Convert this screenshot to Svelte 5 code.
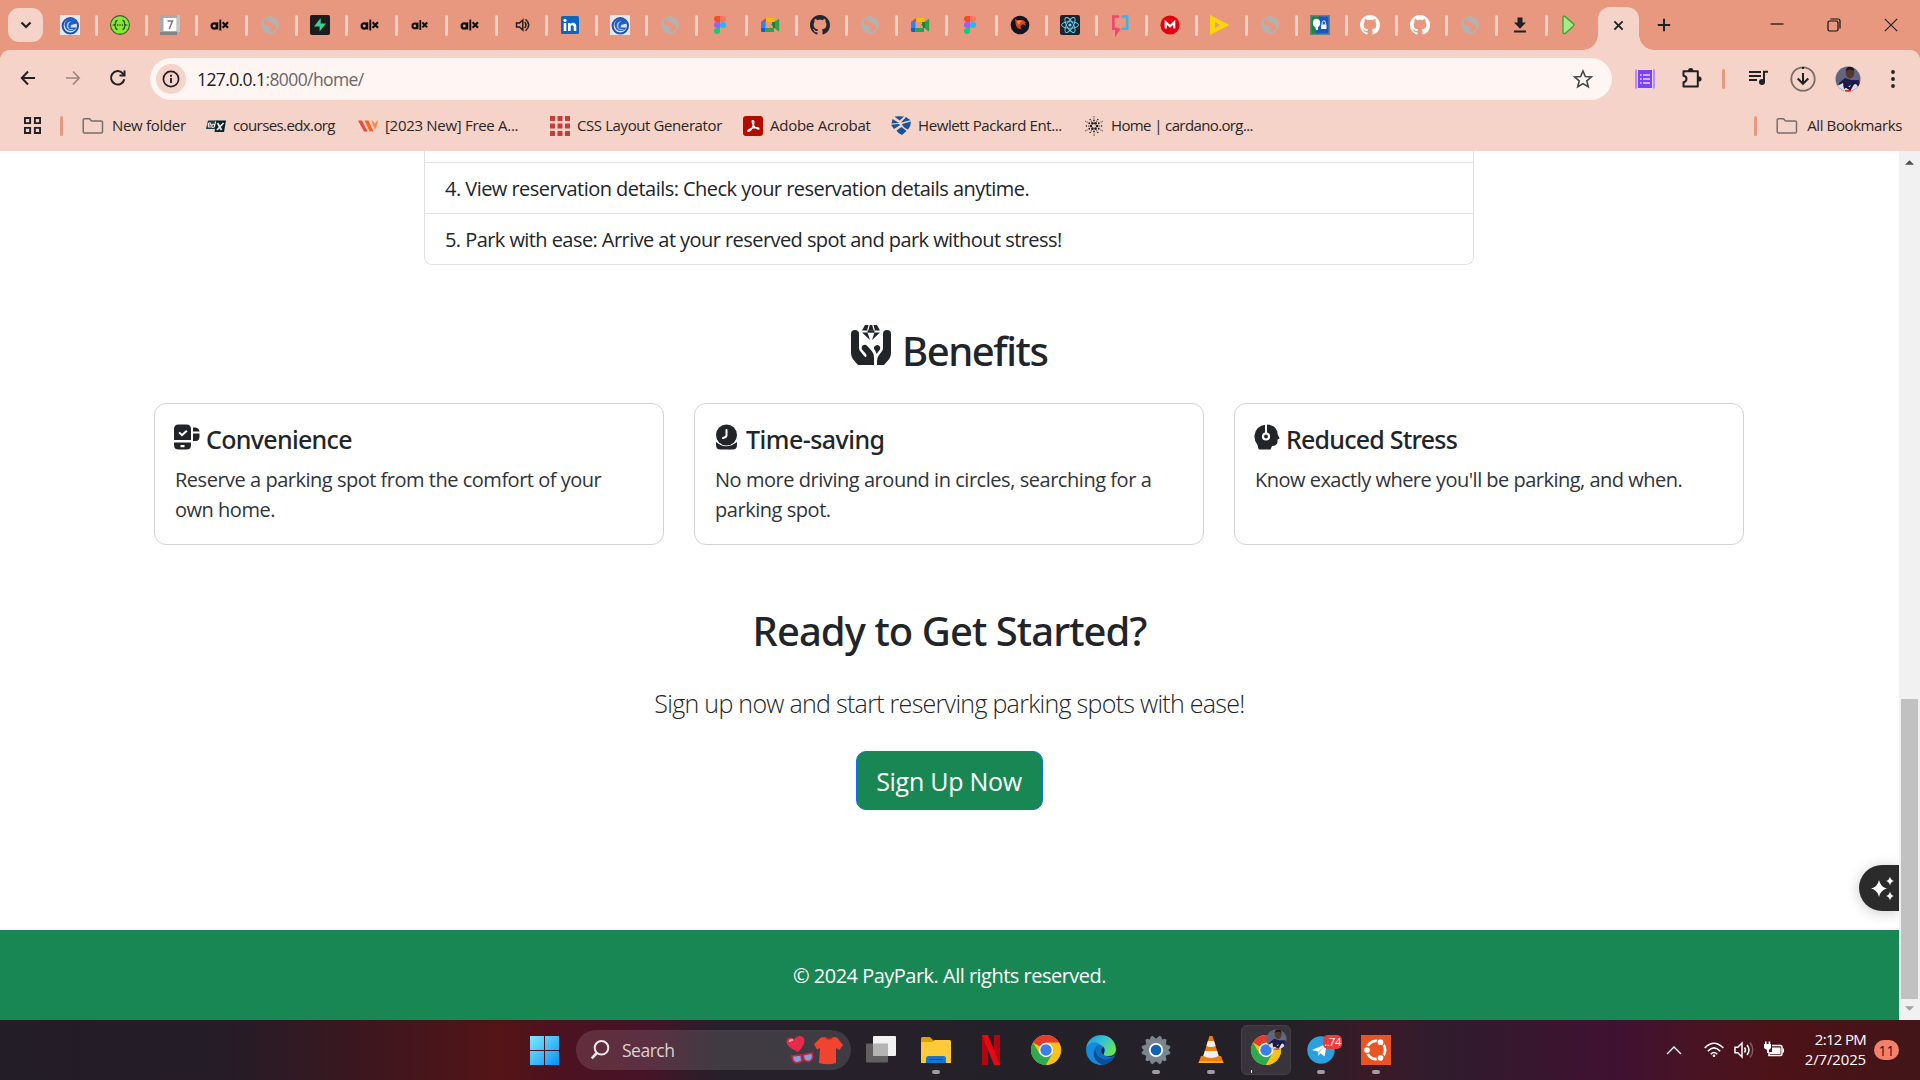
<script>
  const tabs = ['swirl', 'swagger', 'seven', 'alx', 'globe', 'supabase', 'alx', 'alxs', 'alx', 'sound', 'linkedin', 'swirl', 'globe', 'figma', 'meet', 'github', 'globe', 'meet', 'figma', 'dragon', 'react', 'bubble', 'mega', 'yellow', 'globe', 'privacy', 'githubw', 'githubw', 'globe', 'download', 'play'];
  const bookmarks = [
    ['folder', 'New folder', 'b1'],
    ['edx', 'courses.edx.org', 'b2'],
    ['wave', '[2023 New] Free A...', 'b3'],
    ['gridred', 'CSS Layout Generator', 'b4'],
    ['acrobat', 'Adobe Acrobat', 'b5'],
    ['hpe', 'Hewlett Packard Ent...', 'b6'],
    ['cardano', 'Home | cardano.org...', 'b7']
  ];
  const cards = [
    ['conv', 'Convenience', 'Reserve a parking spot from the comfort of your own home.'],
    ['time', 'Time-saving', 'No more driving around in circles, searching for a parking spot.'],
    ['head', 'Reduced Stress', "Know exactly where you'll be parking, and when."]
  ];
  const apps = [
    ['taskview', ''], ['explorer', 'open'], ['netflix', ''], ['chrome', ''], ['edge', ''],
    ['settings', 'open'], ['vlc', 'open'], ['chromeuser', 'active'], ['telegram', 'open'], ['ubuntu', 'open']
  ];
  // Rings of dots: radius, count, dot size, angular offset
  const dots = [];
  for (const [r, n, s, o] of [[3.1, 6, 1.35, 0], [5.5, 6, 0.9, 0.52], [5.6, 6, 0.6, 0], [7.6, 6, 0.75, 0], [8, 6, 0.6, 0.52], [9.6, 6, 0.5, 0.52]])
    for (let i = 0; i < n; i++) {
      const a = (i / n) * Math.PI * 2 + o;
      dots.push([10 + r * Math.cos(a), 10 + r * Math.sin(a), s]);
    }
</script>

{#snippet chromeLogo()}
  <circle cx="15" cy="15" r="15" fill="#fbc116" />
  <path d="M2 7.500A15 15 0 0 1 28 7.500L15 15z" fill="#e33b2e" />
  <path d="M2 7.500A15 15 0 0 0 15 30L21.500 18.750 15 15 8.500 18.750z" fill="#2da94f" />
  <path d="M28 7.500A15 15 0 0 1 15 30L21.500 18.750 15 7.500z" fill="#fbc116" />
  <circle cx="15" cy="15" r="7.200" fill="#fff" />
  <circle cx="15" cy="15" r="5.700" fill="#3b7ded" />
{/snippet}

{#snippet avatar(cls)}
  <svg class={cls} viewBox="0 0 26 26">
    <defs><clipPath id="face"><circle cx="13" cy="13" r="12.500" /></clipPath></defs>
    <g clip-path="url(#face)">
      <rect width="26" height="26" fill="#626580" />
      <path d="M4 17l6-5 6 2 8 0 2 12H3z" fill="#1f1c4b" />
      <ellipse cx="15" cy="6.500" rx="4.300" ry="6" fill="#54382f" />
      <path d="M10.500 5Q12-1 18.500 1.500L19 5Q15 2 10.500 5z" fill="#17151c" />
      <path d="M2 20l6-3 1 6 7-4 5-1 3 4v5H2z" fill="#dcdbe6" />
      <path d="M9 19l6 4 4-7" stroke="#17163c" stroke-width="2.500" fill="none" />
      <path d="M10 24h6v2h-6z" fill="#e02020" />
    </g>
  </svg>
{/snippet}

{#snippet icon(n)}
  {#if n === 'swirl'}
    <svg viewBox="0 0 20 20"><rect width="20" height="20" fill="#e6e8f0" /><circle cx="10.300" cy="10.800" r="7.700" fill="#dbe6f7" stroke="#2552a8" stroke-width="2" /><path d="M14.500 4.500a6.300 6.300 0 1 0 2 8h-6l.5-2.500 6-1.500q-.5-2.500-2.500-4z" fill="#1f5fc9" /><path d="M11.500 6.300a4.500 4.500 0 1 0 2.800 7.700q-6 1-6-3 .3-3.500 3.200-4.700z" fill="#a9c8f5" /></svg>
  {:else if n === 'swagger'}
    <svg viewBox="0 0 20 20"><circle cx="10" cy="10" r="9.400" fill="#85ea2d" stroke="#3e5a3c" stroke-width="1.100" /><path d="M7.500 5.500Q5.700 5.500 5.700 7.500T4 10Q5.700 10.500 5.700 12.500T7.500 14.500M12.500 5.500Q14.300 5.500 14.300 7.500T16 10Q14.300 10.500 14.300 12.500T12.500 14.500" fill="none" stroke="#2c4636" stroke-width="1.300" /><path d="M7 10h1.300M9.400 10h1.300M11.800 10h1.300" stroke="#2c4636" stroke-width="1.400" /></svg>
  {:else if n === 'seven'}
    <svg viewBox="0 0 20 20"><path d="M0 0h20v17l-3 3H0z" fill="#aaa" /><path d="M17 0h3v17h-3z" fill="#c4c4c4" /><path d="M0 17h17v3H0z" fill="#858585" /><path d="M3.500 3h13v13h-13z" fill="#fff" /><path d="M7.500 6h5l-3.300 8" fill="none" stroke="#777" stroke-width="1.500" /></svg>
  {:else if n === 'alx' || n === 'alxs'}
    <svg viewBox="0 0 20 20" class={n}><circle cx="4.300" cy="11" r="2.600" fill="none" stroke="#111" stroke-width="2.300" /><path d="M7.300 7.300v7.300M10.300 4.500v11" stroke="#111" stroke-width="1.900" /><path d="M12.600 7.200l5.400 5.500M18 7.200l-5.400 5.500" stroke="#111" stroke-width="2.200" /></svg>
  {:else if n === 'globe'}
    <svg viewBox="0 0 20 20"><circle cx="10" cy="10" r="8" fill="none" stroke="#b4b2b0" stroke-width="1.800" /><path d="M2 8.500L6 10q3 .3 4 1.500.3 1 1.500 1.200.5 1.300-1.300 1.600-1 .7-.7 3.700Q3 17.500 2 11z" fill="#b4b2b0" /><path d="M9.800 2Q8.500 3 8.700 4.200 6.500 4.500 6.800 6q2 .2 3 .8 1.200 1 2.700.2.300 3 2.500 3 1 1.300 2.800.2Q18 3.500 12 2z" fill="#b4b2b0" /></svg>
  {:else if n === 'supabase'}
    <svg viewBox="0 0 20 20"><rect width="20" height="20" rx="2" fill="#1c1c1c" /><path d="M10.700 3v5.500H16L9.600 16.500V11.400H4z" fill="#3ecf8e" /></svg>
  {:else if n === 'sound'}
    <svg viewBox="0 0 20 20" fill="none" stroke="#1f2022" stroke-width="1.500" class="sound"><path d="M3.500 8h3l3.300-3v10l-3.300-3h-3z" /><path d="M11.700 7q2.600 3 0 6M12.500 4.200q6.500 5.800 0 11.600" /></svg>
  {:else if n === 'linkedin'}
    <svg viewBox="0 0 20 20"><rect x="1" y="1" width="18" height="18" rx="1.500" fill="#0a66c2" /><path d="M3.700 8h2.600v8H3.700zM8 8h2.500v1.200c1.800-2.500 5.800-1.500 5.800 2V16h-2.600v-4.200c0-2.200-3-2.200-3 0V16H8z" fill="#fff" /><circle cx="5" cy="5.300" r="1.600" fill="#fff" /></svg>
  {:else if n === 'figma'}
    <svg viewBox="0 0 20 20"><path d="M10 1H7a3 3 0 0 0 0 6h3z" fill="#f24e1e" /><path d="M10 1h3a3 3 0 0 1 0 6h-3z" fill="#ff7262" /><path d="M10 7H7a3 3 0 0 0 0 6h3z" fill="#a259ff" /><circle cx="13" cy="10" r="3.100" fill="#1abcfe" /><path d="M10 13H7a3 3 0 1 0 3 3z" fill="#0acf83" /></svg>
  {:else if n === 'meet'}
    <svg viewBox="0 0 20 20"><path d="M1 7l5-4v4z" fill="#ea4335" /><path d="M6 3h8.500v4H6z" fill="#fbbc04" /><path d="M1 7h4.500v6H1z" fill="#2684fc" /><path d="M1 13h4.500v4H2.500Q1 17 1 15.500z" fill="#0066da" /><path d="M5.500 13H14v4H5.500zM11 9.500L18.500 4q.7 0 .7.700v11q0 .7-.7.700L14 12.500z" fill="#2ba24c" /><path d="M12 7h3v6h-2z" fill="#188038" /></svg>
  {:else if n === 'github' || n === 'githubw'}
    <svg viewBox="0 0 16 16" class={n}><path d="M8 0C3.580 0 0 3.580 0 8c0 3.540 2.290 6.530 5.470 7.590.4.070.55-.17.55-.38 0-.19-.01-.82-.01-1.490-2.010.37-2.530-.49-2.690-.94-.09-.23-.48-.94-.82-1.130-.28-.15-.68-.52-.01-.53.63-.01 1.080.58 1.230.82.720 1.210 1.870.87 2.330.66.070-.52.28-.87.510-1.070-1.780-.2-3.640-.89-3.640-3.950 0-.87.31-1.590.82-2.150-.08-.2-.36-1.020.08-2.120 0 0 .67-.21 2.200.82.640-.18 1.320-.27 2-.27s1.360.09 2 .27c1.530-1.040 2.200-.82 2.200-.82.440 1.100.160 1.920.080 2.120.51.56.82 1.270.82 2.150 0 3.070-1.870 3.750-3.650 3.950.29.25.54.73.54 1.480 0 1.070-.01 1.930-.01 2.200 0 .21.15.46.55.38A8.010 8.010 0 0 0 16 8c0-4.420-3.580-8-8-8z" /></svg>
  {:else if n === 'dragon'}
    <svg viewBox="0 0 20 20"><circle cx="10" cy="10" r="9.300" fill="#101522" /><path d="M5 3.500q2 2.500 5 1.500 3.500-1 6 3l-1.500.5q1.500 1 1 2.500-2.500-2.500-4.500-.5-1.500 2 1 4-5-.5-6-4-.7-3.500-1-7z" fill="#d2492a" /><path d="M7 6q3-1 5 .5-2.500.5-3 3Q7 8.500 7 6z" fill="#f29a2b" /></svg>
  {:else if n === 'react'}
    <svg viewBox="0 0 20 20"><rect width="20" height="20" rx="2" fill="#20232a" /><g fill="none" stroke="#61dafb" stroke-width=".9"><ellipse cx="10" cy="10" rx="8.500" ry="3.300" /><ellipse cx="10" cy="10" rx="8.500" ry="3.300" transform="rotate(60 10 10)" /><ellipse cx="10" cy="10" rx="8.500" ry="3.300" transform="rotate(120 10 10)" /></g><circle cx="10" cy="10" r="1.600" fill="#61dafb" /></svg>
  {:else if n === 'bubble'}
    <svg viewBox="0 0 20 20" fill="none" stroke-width="2.600"><path d="M9 1.500H3.300v12.200h3V18l3-4.500" stroke="#ef4672" /><path d="M11.500 1.500h5.700v12.200h-5.700" stroke="#35b4ee" /></svg>
  {:else if n === 'mega'}
    <svg viewBox="0 0 20 20"><circle cx="10" cy="10" r="9.600" fill="#e3000f" /><path d="M5.800 13.500V7.300l4.200 4 4.200-4v6.200" fill="none" stroke="#fff" stroke-width="2.200" /></svg>
  {:else if n === 'yellow'}
    <svg viewBox="0 0 20 20"><path fill-rule="evenodd" d="M0 0l19.500 10L0 20zM5 7v6l5-3z" fill="#ffd60a" /></svg>
  {:else if n === 'privacy'}
    <svg viewBox="0 0 20 20"><rect width="20" height="20" fill="#6d8088" /><path d="M1.500 1.500h9l-3 17h-6z" fill="#138a3c" /><path d="M9 1.500h9.500v17H6z" fill="#1259c3" /><ellipse cx="6.500" cy="8" rx="3.600" ry="4.200" fill="#fff" /><path d="M5 11h3v4H6z" fill="#fff" /><rect x="11" y="9.500" width="5.500" height="4.500" fill="#fff" /><path d="M12.200 9.500V7.500a1.600 1.600 0 0 1 3.200 0v2" fill="none" stroke="#fff" /></svg>
  {:else if n === 'download'}
    <svg viewBox="0 0 20 20" fill="#202124"><path d="M7.500 2.500h5v5H16l-6 6.300-6-6.300h3.500zM4 15.500h12v2H4z" /></svg>
  {:else if n === 'play'}
    <svg viewBox="0 0 20 20" class="play"><path d="M5 2.500q0-1.500 1.800-1.200Q8 2 15.500 9q1 1 0 2-7.500 7-8.700 7.600Q5 18.700 5 17.500z" fill="#a9e88b" stroke="#3fa62b" stroke-width="1.400" /></svg>
  {:else if n === 'folder'}
    <svg viewBox="0 0 22 20"><path d="M1.200 4Q1.200 2.700 2.500 2.700h5l2 2.300h9.700q1.300 0 1.300 1.300v9.500q0 1.300-1.300 1.300H2.500q-1.300 0-1.300-1.300z" fill="none" stroke="#747070" stroke-width="1.500" /></svg>
  {:else if n === 'edx'}
    <svg viewBox="0 0 20 20"><path d="M2 4.500h9.500L9.500 13H0z" fill="#1c3b45" /><path d="M10.500 4.500H20L18 16H8.500z" fill="#02262b" /><g fill="none" stroke="#f4ebe8" stroke-width="1.100"><path d="M2.300 9H5Q5 6.500 3.300 7T2.600 11H5M8.500 9.500Q7 6.600 5.900 9.500T8.300 10.800L9.600 5.500" /><path d="M11.500 7l4 7M17.500 7l-6.500 7" stroke-width="1.800" /></g></svg>
  {:else if n === 'wave'}
    <svg viewBox="0 0 20 20"><path d="M0 4.500h4L9.500 15.500H6z" fill="#f0483b" /><path d="M6.500 4.500h4l5 11h-3.800z" fill="#f86423" /><path d="M13 4.500q3 0 3.500 3.500 1-2.500 3.500-3.500-.5 5-3 9z" fill="#f98a4b" /></svg>
  {:else if n === 'gridred'}
    <svg viewBox="0 0 20 20" fill="#c33f3d">{#each [0, 7.500, 15] as y}{#each [0, 7.500, 15] as x}<rect {x} {y} width="5" height="5" />{/each}{/each}</svg>
  {:else if n === 'acrobat'}
    <svg viewBox="0 0 20 20"><rect width="20" height="20" rx="3" fill="#b30b00" /><path d="M9.300 4.500q2.500-.3 1.200 4-1.800 6-5 7-2-.5 1.500-2.500 4.500-2 8.500-1.200 1.500 1.500-.8 1.200-3-1.200-5-5-.8-2-.4-3.500z" fill="none" stroke="#fff" stroke-width="1.200" /></svg>
  {:else if n === 'hpe'}
    <svg viewBox="0 0 20 20" fill="#15539b"><path d="M3.500.5Q9 0 13 .5L8.500 4.500zM15 1l4.500 3.200L10 6.500zM1.500 3l6.500 4-7.500.5zM0 8.800L7.500 8q2 0 1 1.500L3 13zM11 8l9-2.500q0 4-3 8-5-2-6-5.500zM10.500 11l5 4L11 19q-4-1.500-5.500-4.500z" /></svg>
  {:else if n === 'cardano'}
    <svg viewBox="0 0 20 20" fill="#222">{#each dots as [x, y, r]}<circle cx={x} cy={y} {r} />{/each}</svg>
  {:else if n === 'conv'}
    <svg viewBox="0 0 26 26"><path fill-rule="evenodd" d="M0 16V5q0-4.500 4.500-4.500h8Q17 .500 17 5v11zM4.500 9l3.500 3.500 5.500-5-1.300-1.400L8 9.800 5.800 7.700z" /><path fill-rule="evenodd" d="M0 18.500h17V21q0 4.500-4.500 4.500h-8Q0 25.500 0 21zM6.500 21v2.200h4V21zM19 3.500h2.500Q25 4 25.500 7.500H19zM19 9.500h6.500v3q0 4.500-4 4.500H19z" /></svg>
  {:else if n === 'time'}
    <svg viewBox="0 0 26 26"><circle cx="12.500" cy="11" r="10.500" /><path d="M2 18q10 8.500 21 0v3q0 4.500-4.500 4.500h-12Q2 25.500 2 21z" /><path d="M12.500 6v5.500q-.5 2-3.500 2.500" fill="none" stroke="#fff" stroke-width="2" stroke-linecap="round" /></svg>
  {:else if n === 'head'}
    <svg viewBox="0 0 26 26"><path d="M12 .500Q23.500 1 23.700 10.500l1.800 3.500q0 1-2 1.500v2.500q-.5 4-5.500 4l-1.500 3.500H5q-1-1-1.500-4.500Q0 17 .5 11.500 1.500 2 12 .500z" /><circle cx="12" cy="12.500" r="3" fill="none" stroke="#fff" stroke-width="2.200" /><path d="M12 0v9" stroke="#fff" stroke-width="2" /></svg>
  {/if}
{/snippet}

{#snippet app(n)}
  <svg viewBox="0 0 30 30">
    {#if n === 'taskview'}
      <rect x="0" y="8.500" width="22" height="19" rx="1" fill="#606060" /><rect x="7" y="1" width="23" height="20" rx="1" fill="#f2f2f2" /><rect x="7" y="8.500" width="15" height="12.500" fill="#b4b4b4" />
    {:else if n === 'explorer'}
      <path d="M0 8V3.500Q0 2 1.500 2H9l3.500 3.500H29L30 12z" fill="#e0a000" /><path d="M0 7h11l3-2h14.500Q30 5 30 6.500V28H0z" fill="#ffca3a" /><path d="M5 28v-4.500Q5 21 7.500 21h15q2.500 0 2.500 2.500V28z" fill="#1378d0" /><path d="M8 24.500h14" stroke="#0b4f9b" stroke-width="1.200" />
    {:else if n === 'netflix'}
      <path d="M6 0h6v30H6zM18 0h6v30h-6z" fill="#b1060f" /><path d="M6 0h6l12 30h-6z" fill="#e50914" />
    {:else if n === 'chrome' || n === 'chromeuser'}
      {@render chromeLogo()}
    {:else if n === 'edge'}
      <defs><linearGradient id="e1" x1="0" y1="0" x2="1" y2=".6"><stop offset="0" stop-color="#1996d8" /><stop offset=".5" stop-color="#35c1d8" /><stop offset="1" stop-color="#66e45c" /></linearGradient></defs>
      <circle cx="15" cy="15" r="15" fill="#1170c4" /><path d="M.3 13C2-3 28-5 30 14q0 7-8 7-6 0-4-3 3-5-3-8Q5 6 .3 13z" fill="url(#e1)" /><path d="M0 14Q5 4 14 9q-8 3-6 11 2 7 8 9.800Q2 30 0 14z" fill="#148bdf" /><path d="M11 12q-3 5 2 10 6 5 15-.5Q24 29 16.500 30 6 25 8 17z" fill="#0c4f97" /><path d="M17.500 12q-2.500 1.500-2 5 2 4.500 7 5 3.500 0 6-1.500l1.500-4q-2 5-8 5-6-.5-4-3 1-3-.5-6.500z" fill="#211f25" />
    {:else if n === 'settings'}
      <g fill="#7b858d"><circle cx="15" cy="15" r="11.500" />{#each [0, 60, 120, 180, 240, 300] as a}<path d="M9.500 5L11 .8h2l2 2 2-2h2L20.500 5z" transform="rotate({a + 30} 15 15)" />{/each}</g><circle cx="15" cy="15" r="6.200" fill="#1262b3" stroke="#fff" stroke-width="1.800" />
    {:else if n === 'vlc'}
      <path d="M5 21h20l2.500 7H2.500z" fill="#ef7d08" /><path d="M13.500 1h3L23 22q-8 4-16 0z" fill="#f08009" /><path d="M11.900 6h6.200l1.500 5q-4.600 2-9.200 0zM8.800 16h12.400l1.500 5q-7.700 4-15.400 0z" fill="#f0f0f0" /><path d="M2.500 28h25l-.7-2H3.200z" fill="#ffa52b" />
    {:else if n === 'telegram'}
      <circle cx="15" cy="15" r="13.700" fill="#2aa1dc" /><path d="M6 15l15-6.500-2.500 13-4-3.200-2 2.500-.8-4.300z" fill="#fff" /><path d="M11.700 16.500l6.500-5-4.500 6-1.200 3z" fill="#a9d5ee" />
    {:else if n === 'ubuntu'}
      <rect width="30" height="30" fill="#e95420" /><circle cx="15" cy="15" r="9.200" fill="none" stroke="#fff" stroke-width="2.700" /><g fill="#fff" stroke="#e95420" stroke-width="1.100"><circle cx="6" cy="15" r="3.400" /><circle cx="19.500" cy="7.200" r="3.400" /><circle cx="19.500" cy="22.800" r="3.400" /></g>
    {/if}
  </svg>
{/snippet}

<div class="screen">
  <div class="tabstrip">
    <button class="search-tabs" aria-label="Search tabs"><svg viewBox="0 0 12 8"><path d="M1.500 1.500L6 6l4.500-4.500" fill="none" stroke="#202124" stroke-width="2.200" /></svg></button>
    {#each tabs as t}<div class="tab">{@render icon(t)}</div>{/each}
    <div class="current"><svg viewBox="0 0 12 12"><path d="M1.500 1.500l9 9M10.500 1.500l-9 9" stroke="#202124" stroke-width="2" /></svg></div>
    <div class="new"><svg viewBox="0 0 14 14"><path d="M7 .800v12.400M.800 7h12.400" stroke="#202124" stroke-width="2" /></svg></div>
    <div class="controls">
      <svg viewBox="0 0 14 14"><path d="M.5 6h13" stroke="#111" stroke-width="1.200" /></svg>
      <svg viewBox="0 0 14 14" fill="none" stroke="#111" stroke-width="1.200"><rect x="1" y="3" width="10" height="10" rx="1.500" /><path d="M3.500 1H11q2 0 2 2v7.500" /></svg>
      <svg viewBox="0 0 14 14"><path d="M.8.800l12.400 12.400M13.200.800L.8 13.200" stroke="#222" stroke-width="1.200" /></svg>
    </div>
  </div>

  <div class="toolbar">
    <svg class="nav" viewBox="0 0 16 16"><path d="M15 8H2M8 1.500L1.800 8 8 14.500" fill="none" stroke="#202124" stroke-width="2" /></svg>
    <svg class="nav faint" viewBox="0 0 16 16"><path d="M1 8h13M8 1.500L14.200 8 8 14.500" fill="none" stroke="#202124" stroke-width="1.700" /></svg>
    <svg class="nav" viewBox="0 0 16 16"><path d="M14.300 9.200A6.700 6.700 0 1 1 12.700 3.300L14.500 5.400" fill="none" stroke="#202124" stroke-width="2" /><path d="M15.500.500v6h-6l0-2h4V.500z" fill="#202124" /></svg>
    <div class="address">
      <span class="info"><svg viewBox="0 0 18 18"><circle cx="9" cy="9" r="7.600" fill="none" stroke="#202124" stroke-width="1.700" /><path d="M9 8v5M9 4.700v2" stroke="#202124" stroke-width="1.900" /></svg></span>
      <span class="url">127.0.0.1<em>:8000/home/</em></span>
      <svg class="star" viewBox="0 0 20 20"><path d="M10 2l2.400 5.500 6 .5-4.600 3.900 1.500 5.900L10 14.600l-5.300 3.200 1.500-5.900L1.600 8l6-.5z" fill="none" stroke="#444648" stroke-width="1.600" /></svg>
    </div>
    <svg class="ext" viewBox="0 0 22 22"><rect x="1" y="1" width="20" height="20" rx="2" fill="#b58cff" /><rect x="3.500" y="1.500" width="15" height="19" fill="#7d41fb" stroke="#e6d9ff" /><path d="M9 7h7M9 11h7M9 15h7M6 7h1.600M6 11h1.600M6 15h1.600" stroke="#e6d9ff" stroke-width="1.500" /></svg>
    <svg class="puzzle" viewBox="0 0 22 22"><path d="M2.500 4.300h14.300v15.200H2.500v-4.300q3-.5 3-3.200t-3-3.200z" fill="none" stroke="#202124" stroke-width="2" stroke-linejoin="round" /><path d="M7 4a2.700 3 0 0 1 5.400 0zM17 9.200a3.600 2.700 0 0 1 0 5.400z" fill="#202124" /></svg>
    <i class="rule"></i>
    <svg class="music" viewBox="0 0 20 16"><path d="M0 2h12M0 6h12M0 10h8" stroke="#202124" stroke-width="1.800" /><path d="M15 12V1.800h4" fill="none" stroke="#202124" stroke-width="2" /><circle cx="13" cy="12" r="3" fill="#202124" /></svg>
    <svg class="dl" viewBox="0 0 26 26" fill="none"><circle cx="13" cy="13" r="11.700" stroke="#7b6b67" stroke-width="1.800" /><path d="M13 1v2M13 7v10M7.700 12.500L13 17.800l5.300-5.300" stroke="#202124" stroke-width="2" /></svg>
    {@render avatar('me')}
    <svg class="dots" viewBox="0 0 4 18" fill="#202124"><circle cx="2" cy="2" r="1.900" /><circle cx="2" cy="9" r="1.900" /><circle cx="2" cy="16" r="1.900" /></svg>
  </div>

  <div class="bookmarks">
    <svg class="appsgrid" viewBox="0 0 18 18" fill="none" stroke="#202124" stroke-width="2"><path d="M1 1h5.500v5.500H1zM11.500 1H17v5.500h-5.500zM1 11.500h5.500V17H1zM11.500 11.500H17V17h-5.500z" /></svg>
    <i class="rule"></i>
    <div class="links">
      {#each bookmarks as [ic, label, cls]}<div class="link {ic}">{@render icon(ic)}<span class={cls}>{label}</span></div>{/each}
    </div>
    <i class="rule"></i>
    <div class="link folder all">{@render icon('folder')}<span class="b8">All Bookmarks</span></div>
  </div>

  <div class="viewport">
    <div class="page">
      <ul class="steps">
        <li class="cut"></li>
        <li><span class="s4">4. View reservation details: Check your reservation details anytime.</span></li>
        <li><span class="s5">5. Park with ease: Arrive at your reserved spot and park without stress!</span></li>
      </ul>
      <h2 class="benefits">
        <svg viewBox="0 0 40 40"><path d="M0 9a4 4 0 0 1 8 0v14q0 2 1.500 3.500l4 5q1.500 1 2-.5.300-1-.5-2L11 24.500q-1-3 1-4.300 2.500-1 4.500 1l4.500 5q2 2.500 2 6V40H7L1.800 34Q0 31.500 0 28z" /><path d="M40 9a4 4 0 0 0-8 0v14q0 2-1.300 3.500l-3 4Q26 33 26 36v4h7l5.200-6Q40 31.500 40 28z" /><path d="M23 22q2.500-3 5-1.500 2 1.500 1 4L25.500 29q-.5-3-2.500-5z" /><path d="M14 0h3.500l-1.500 5.500h-5zM22.500 0H26l3 5.500h-5zM18.800 0h2.400l1.500 5.500h-5.400zM11 7.500h5.500L19 15zM29 7.500h-5.500L21 15z" /><path d="M16.500 5.300h7v2.400h-7z" /></svg>
        <span>Benefits</span>
      </h2>
      <div class="cards">
        {#each cards as [ic, title, body]}
          <div class="card"><h5 class={ic}>{@render icon(ic)}<span>{title}</span></h5><p class={ic}>{body}</p></div>
        {/each}
      </div>
      <h2 class="ready">Ready to Get Started?</h2>
      <p class="lead">Sign up now and start reserving parking spots with ease!</p>
      <button class="signup"><span>Sign Up Now</span></button>
      <footer><span>© 2024 PayPark. All rights reserved.</span></footer>
      <div class="assist"><svg viewBox="0 0 24 24" fill="#fff"><path d="M9 4q1.500 7 8 8.500Q10.500 14 9 21 7.500 14 1 12.500 7.500 11 9 4zM20 .500q.8 3.700 4 4.500-3.200.8-4 4.500-.8-3.700-4-4.500 3.200-.8 4-4.500zM20 15.500q.8 3.700 4 4.500-3.200.8-4 4.500-.8-3.700-4-4.500 3.200-.8 4-4.500z" /></svg></div>
    </div>
    <div class="scroll">
      <svg viewBox="0 0 10 5"><path d="M5 0l5 5H0z" fill="#505050" /></svg>
      <i></i>
      <svg viewBox="0 0 10 5"><path d="M0 0h10L5 5z" fill="#a0a0a0" /></svg>
    </div>
  </div>

  <div class="taskbar">
    <svg class="start" viewBox="0 0 29 29"><defs><linearGradient id="win" gradientUnits="userSpaceOnUse" x1="0" y1="0" x2="29" y2="29"><stop offset="0" stop-color="#7eeaff" /><stop offset="1" stop-color="#0a91f5" /></linearGradient></defs><path d="M0 0h14v14H0zM15 0h14v14H15zM0 15h14v14H0zM15 15h14v14H15z" fill="url(#win)" /></svg>
    <div class="search">
      <svg class="lens" viewBox="0 0 18 20" fill="none" stroke="#f0e8ec" stroke-width="2"><circle cx="10.500" cy="7.800" r="6.800" /><path d="M5.800 13L.8 18.300" stroke-width="2.600" /></svg>
      <span>Search</span>
      <svg class="gift" viewBox="0 0 57 28">
        <path d="M12 16Q0 11 .5 5 2-.5 8.500 3q4-5 9-1.500Q21 8 12 16z" fill="#e62a4a" /><path d="M3.500 6q.5-2.500 3.500-2" stroke="#ff9aa5" stroke-width="2.200" fill="none" />
        <path d="M6 20l9-1 1 6q-7 4-9-1zM17 19l9-2q2 6-2 8-5 1-6-2z" fill="#7ba6da" stroke="#d3203c" stroke-width="1.600" />
        <path d="M28 8l7-6.500 4-.5q4 4 8 0l4 .500L57 9l-3.500 5-3.500-2v15q-8 2.500-17 0l1-15-3 1.500z" fill="#f0442f" /><path d="M39 1q4 4 8 0" fill="none" stroke="#b8281c" stroke-width="1.500" />
      </svg>
    </div>
    <div class="apps">
      {#each apps as [name, state]}
        <div class="app {state}">
          {@render app(name)}
          {#if name === 'chromeuser'}{@render avatar('user')}{/if}
          {#if name === 'telegram'}<b>..74</b>{/if}
        </div>
      {/each}
    </div>
    <div class="tray">
      <svg class="chev" viewBox="0 0 16 10"><path d="M1 9l7-7 7 7" fill="none" stroke="#fff" stroke-width="1.400" /></svg>
      <svg class="wifi" viewBox="0 0 20 16" fill="none" stroke="#fff" stroke-width="1.600"><path d="M.7 6Q10-3.500 19.300 6M3.800 9.200Q10 2.500 16.200 9.200M6.700 12.200Q10 8.800 13.300 12.200" /><circle cx="10" cy="13.800" r="1.300" fill="#fff" stroke="none" /></svg>
      <svg class="vol" viewBox="0 0 20 18" fill="none" stroke="#fff" stroke-width="1.500"><path d="M1 6.200h2.800L8 2v14l-4.200-4.200H1z" /><path d="M10.500 6.500q2 2.500 0 5M13 4q4 5 0 10" /><path d="M16 1.500q5.500 7.500 0 15" stroke="#85595c" /></svg>
      <svg class="bat" viewBox="0 0 20 17"><path d="M8 4.500h8.500q1.500 0 1.500 1.500v7q0 1.500-1.500 1.500H5V11" fill="none" stroke="#fff" stroke-width="1.500" /><path d="M18.500 7.500H20v4h-1.500zM8 6.500h8.500V13H6v-2h2zM0 3h7v4L5 9v3H3V9L0 7zM1 .500h1.600V3H1zM4.600.500h1.600V3H4.600z" fill="#fff" /></svg>
      <div class="clock"><span class="hr">2:12 PM</span><span class="day">2/7/2025</span></div>
      <span class="badge">11</span>
    </div>
  </div>
</div>

<style>
  :global(body) { margin: 0; overflow: hidden; }
  .screen { width: 1920px; height: 1080px; display: flex; flex-direction: column; font-family: 'Open Sans', 'Noto Sans', sans-serif; color: #212529; background: #fff; }
  .screen :global(*) { box-sizing: border-box; }
  svg { display: block; flex: none; overflow: visible; }
  button { border: 0; padding: 0; font: inherit; }
  span { white-space: nowrap; }

  .tabstrip { height: 50px; display: flex; align-items: center; background: #e8987e; padding-left: 8px; }
  .search-tabs { width: 35px; height: 34px; border-radius: 11px; background: #f5d3c8; display: grid; place-items: center; margin-right: 2px; }
  .search-tabs svg { width: 12px; height: 8px; }
  .tab { width: 50px; height: 20px; display: grid; place-items: center; position: relative; }
  .tab::after { content: ''; position: absolute; right: -3px; top: 0; width: 3px; height: 21px; border-radius: 2px; background: #f5d3c8; }
  .tab:nth-last-child(4)::after { display: none; }
  .tab svg { width: 20px; height: 20px; }
  .tab svg.alxs { width: 18px; height: 18px; }
  .tab svg.sound { margin-left: 5px; }
  .tab svg.play { margin-right: 4px; }
  .github { fill: #24292f; }
  .githubw { fill: #fff; }
  .current { position: relative; width: 41px; height: 43px; margin: 7px 0 0 2.500px; border-radius: 12px 12px 0 0; background: #f5d3c8; display: grid; place-items: center; padding-bottom: 7px; }
  .current svg { width: 11px; height: 11px; }
  .current::before, .current::after { content: ''; position: absolute; bottom: 0; width: 15px; height: 15px; }
  .current::before { right: 100%; background: radial-gradient(circle at 0 0, transparent 14.500px, #f5d3c8 15px); }
  .current::after { left: 100%; background: radial-gradient(circle at 100% 0, transparent 14.500px, #f5d3c8 15px); }
  .new { margin-left: 18px; }
  .new svg { width: 14px; height: 14px; }
  .controls { margin-left: auto; display: flex; padding-right: 22px; gap: 43px; }
  .controls svg { width: 14px; height: 14px; }

  .toolbar { height: 50px; display: flex; align-items: center; padding: 8px 0 0 20px; background: radial-gradient(circle at 10px 10px, #f5d3c8 9.700px, #e8987e 10.300px) 0 0 / 10px 10px no-repeat, radial-gradient(circle at 0 10px, #f5d3c8 9.700px, #e8987e 10.300px) 100% 0 / 10px 10px no-repeat, #f5d3c8; }
  .toolbar .nav { width: 16px; height: 16px; margin: 0 29px 2px 0; }
  .toolbar .faint { opacity: .42; }
  .address { width: 1462px; height: 42px; margin-left: -5px; border-radius: 21px; background: #fff5f2; display: flex; align-items: center; padding: 0 19px 0 6px; }
  .info { width: 30px; height: 30px; border-radius: 50%; background: #f5d3c8; display: grid; place-items: center; }
  .info svg { width: 18px; height: 18px; }
  .url { flex: 1; margin-left: 11px; font-size: 17.500px; letter-spacing: -.6px; color: #202124; }
  .url em { font-style: normal; color: #6c6664; }
  .star { width: 20px; height: 20px; }
  .ext { width: 22px; height: 22px; margin-left: 22px; }
  .puzzle { width: 22px; height: 22px; margin-left: 25px; margin-bottom: 2px; }
  .rule { width: 3px; height: 20px; border-radius: 2px; background: #e8987e; }
  .toolbar .rule { margin-left: 19px; }
  .music { width: 20px; height: 16px; margin: 0 0 2px 24px; }
  .dl { width: 26px; height: 26px; margin-left: 21px; }
  .me { width: 26px; height: 26px; margin-left: 19px; }
  .dots { width: 4px; height: 18px; margin-left: 30px; }

  .bookmarks { height: 51px; display: flex; align-items: center; background: #f5d3c8; padding: 0 18px 0 24px; }
  .appsgrid { width: 17px; height: 17px; margin-right: 19px; }
  .links { flex: 1; margin-left: 19px; display: grid; grid-template-columns: 124px 152px 192px 193px 148px 193px auto; }
  .link { display: flex; align-items: center; font-size: 15px; color: #2a2627; letter-spacing: -.4px; }
  .link svg { width: 20px; height: 20px; margin-right: 7px; }
  .link.folder svg { width: 22px; margin-right: 8px; }
  .link span { padding-bottom: 2px; }
  .b1 { letter-spacing: -.3px; }
  .b2 { letter-spacing: -.6px; }
  .b3 { letter-spacing: -.3px; }
  .b5 { letter-spacing: -.25px; }
  .b7 { letter-spacing: -.62px; }
  .all { margin-left: 19px; }
  .b8 { margin-left: 1px; }

  .viewport { height: 869px; display: flex; }
  .page { width: 1899px; position: relative; display: flex; flex-direction: column; align-items: center; overflow: hidden; }
  .steps { list-style: none; margin: 0 1px 0 0; padding: 0; width: 1050px; border: 1px solid #dee2e6; border-top: 0; border-radius: 0 0 8px 8px; font-size: 20px; }
  .steps li { height: 51px; border-top: 1px solid #dee2e6; padding-left: 20px; display: flex; align-items: center; }
  .steps li.cut { height: 11px; border: 0; }
  .s4 { letter-spacing: -.54px; }
  .s5 { letter-spacing: -.565px; }
  h2, h5, p { margin: 0; }
  h2 { font-family: 'Noto Sans', 'Open Sans', sans-serif; font-size: 40px; font-weight: 500; line-height: 48px; }
  .benefits { display: flex; margin-top: 61px; height: 48px; width: 197px; letter-spacing: -1.450px; }
  .benefits svg { width: 40px; height: 40px; margin-right: 11px; fill: #212529; margin-top: -1px; }
  .benefits span { padding-top: 1px; }
  .cards { width: 1590px; margin-top: 29px; display: grid; grid-template-columns: repeat(3, 1fr); gap: 30px; margin-right: 1px; }
  .card { height: 142px; border: 1px solid #d3d3d4; border-radius: 12px; padding: 20px 19px; font-size: 20px; line-height: 30px; }
  h5 { display: flex; font-family: 'Noto Sans', 'Open Sans', sans-serif; font-size: 25px; font-weight: 500; line-height: 30px; height: 41px; }
  h5 svg { width: 26px; height: 26px; fill: #212529; margin-right: 6px; }
  h5.conv { letter-spacing: -.69px; }
  h5.time { letter-spacing: -.53px; }
  h5.head { letter-spacing: -.78px; }
  .card p { color: #303438; padding-left: 1px; }
  p.conv { letter-spacing: -.485px; }
  p.time { letter-spacing: -.456px; }
  p.head { letter-spacing: -.51px; }
  .ready { margin-top: 62px; letter-spacing: -.930px; }
  .lead { margin-top: 29px; font-size: 25px; font-weight: 300; line-height: 38px; letter-spacing: -.71px; }
  .signup { margin: 29px 1px 0 0; width: 187px; height: 59px; border: 1px solid #0d6efd; border-radius: 10px; background: #198754; color: #fff; font-size: 25px; letter-spacing: -.27px; }
  footer { width: 100%; height: 90px; margin-top: auto; background: #198754; color: #fff; font-size: 20px; letter-spacing: -.51px; display: grid; place-items: center; }
  .assist { position: absolute; right: 0; top: 714px; width: 40px; height: 46px; border-radius: 23px 0 0 23px; background: #2b2b2b; box-shadow: 0 2px 14px rgba(0, 0, 0, .2); padding: 11px 0 0 11px; }
  .assist svg { width: 24px; height: 24px; }
  .scroll { width: 21px; background: #f1f1f1; display: flex; flex-direction: column; align-items: center; padding: 9px 0 9px; }
  .scroll svg { width: 9px; height: 5px; }
  .scroll i { width: 17px; height: 300px; background: #c1c1c1; margin: auto 0 7px; }

  .taskbar { height: 60px; display: flex; align-items: center; padding-left: 530px; color: #fff; background: linear-gradient(90deg, #231d28 0, #251c27 230px, #3b171e 360px, #541417 500px, #4c1222 570px, #451427 650px, #26202a 720px, #232127 1290px, #3b1a27 1370px, #2f1c2d 1440px, #401131 1620px, #481322 1700px, #4c1217 1780px, #421519 1920px); }
  .start { width: 29px; height: 29px; margin-right: 17px; }
  .search { width: 275px; height: 40px; border-radius: 20px; background: rgba(255, 255, 255, .12); display: flex; align-items: center; padding: 0 8px 0 15px; font-size: 17.500px; color: #dcd1d6; }
  .lens { width: 18px; height: 20px; margin-right: 13px; }
  .search span { flex: 1; letter-spacing: -.5px; }
  .gift { width: 57px; height: 28px; }
  .apps { display: flex; gap: 5px; margin-left: 5px; }
  .app { width: 50px; height: 50px; border-radius: 6px; display: grid; place-items: center; position: relative; }
  .app > svg { width: 30px; height: 30px; }
  .app.open::after { content: ''; position: absolute; left: 21px; top: 45px; width: 8px; height: 4px; border-radius: 2px; background: #a29b9f; }
  .app.active { background: #39343b; border: 1px solid #454047; }
  .app.active::after { content: ''; position: absolute; left: 9px; top: 44px; width: 1px; height: 3px; background: #fff; }
  .app .user { position: absolute; left: 24px; top: 3px; width: 21px; height: 21px; }
  .app b { position: absolute; left: 27px; top: 10px; width: 19px; height: 14px; border-radius: 5px; background: #e5403b; font: 11px/14px 'Open Sans', sans-serif; letter-spacing: -.5px; text-align: center; }
  .tray { margin-left: auto; display: flex; align-items: center; padding-right: 21px; }
  .chev { width: 16px; height: 10px; margin-right: 22px; }
  .wifi { width: 20px; height: 16px; margin-right: 10px; }
  .vol { width: 20px; height: 18px; margin-right: 10px; }
  .bat { width: 20px; height: 17px; margin-bottom: 2px; }
  .clock { width: 82px; display: flex; flex-direction: column; align-items: flex-end; font-size: 15px; line-height: 20px; padding-bottom: 2px; }
  .hr { letter-spacing: -.7px; }
  .day { letter-spacing: -.15px; }
  .badge { width: 25px; height: 20px; margin-left: 8px; border-radius: 10px; background: #f3806a; color: #2d1512; font-size: 14px; line-height: 21px; text-align: center; }
</style>
